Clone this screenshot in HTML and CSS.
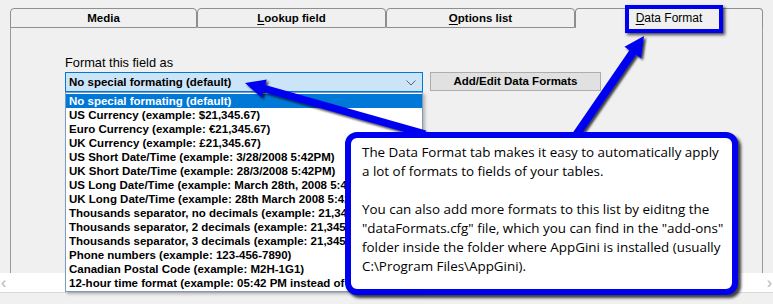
FILE: index.html
```html
<!DOCTYPE html>
<html>
<head>
<meta charset="utf-8">
<link rel="stylesheet" href="styles.css">
</head>
<body>
<div class="window">
  <div class="tabs">
    <div class="tab tab-media">Media</div>
    <div class="tab tab-lookup"><u>L</u>ookup field</div>
    <div class="tab tab-options"><u>O</u>ptions list</div>
    <div class="tab tab-format selected"><u>D</u>ata Format</div>
  </div>
  <div class="panel">
    <div class="label">Format this field as</div>
    <div class="row">
      <div class="combo">
        <span>No special formating (default)</span>
        <svg class="chev" width="10" height="6" viewBox="0 0 10 6"><polyline points="0.5,0.5 5,5 9.5,0.5" fill="none" stroke="#606060" stroke-width="1"/></svg>
      </div>
      <div class="button">Add/Edit Data Formats</div>
    </div>
  </div>
  <div class="hscroll">
    <span class="sarrow">&lsaquo;</span>
    <span class="sarrow">&rsaquo;</span>
  </div>
  <div class="footer"></div>

  <ul class="dropdown">
    <li class="sel">No special formating (default)</li>
    <li>US Currency (example: $21,345.67)</li>
    <li>Euro Currency (example: €21,345.67)</li>
    <li>UK Currency (example: £21,345.67)</li>
    <li>US Short Date/Time (example: 3/28/2008 5:42PM)</li>
    <li>UK Short Date/Time (example: 28/3/2008 5:42PM)</li>
    <li>US Long Date/Time (example: March 28th, 2008 5:42PM)</li>
    <li>UK Long Date/Time (example: 28th March 2008 5:42PM)</li>
    <li>Thousands separator, no decimals (example: 21,345)</li>
    <li>Thousands separator, 2 decimals (example: 21,345.67)</li>
    <li>Thousands separator, 3 decimals (example: 21,345.678)</li>
    <li>Phone numbers (example: 123-456-7890)</li>
    <li>Canadian Postal Code (example: M2H-1G1)</li>
    <li>12-hour time format (example: 05:42 PM instead of 17:42)</li>
  </ul>

  <svg class="arrows" width="773" height="304" viewBox="0 0 773 304">
    <defs>
      <filter id="sh" x="-20%" y="-20%" width="140%" height="140%">
        <feDropShadow dx="2" dy="2" stdDeviation="1.3" flood-color="#000" flood-opacity="0.75"/>
      </filter>
    </defs>
    <polygon filter="url(#sh)" fill="#0000f0" points="245,83 266.8,79.4 265.2,85.1 426,130.6 424,137.4 263.2,91.9 261.6,97.6"/>
    <polygon filter="url(#sh)" fill="#0000f0" points="644,36 640.95,58.16 636,54.8 577.3,140.3 570.7,135.7 629.4,50.2 624.45,46.84"/>
  </svg>

  <div class="tabmark"></div>

  <div class="callout">
    The Data Format tab makes it easy to automatically apply<br>
    a lot of formats to fields of your tables.<br>
    <br>
    You can also add more formats to this list by eiditng the<br>
    "dataFormats.cfg" file, which you can find in the "add-ons"<br>
    folder inside the folder where AppGini is installed (usually<br>
    C:\Program Files\AppGini).
  </div>
</div>
</body>
</html>
```

FILE: styles.css
```css
html, body {
  margin: 0;
  padding: 0;
}
body {
  background: #f0f0f0;
  width: 773px;
  height: 304px;
  overflow: hidden;
  font-family: "Liberation Sans", Arial, sans-serif;
  color: #000;
}
.window {
  position: relative;
  width: 773px;
  height: 304px;
}
.tabs {
  display: flex;
  padding: 8px 0 0 10px;
  height: 20px;
}
.tab {
  box-sizing: border-box;
  height: 20px;
  border: 1px solid #8e8e8e;
  border-radius: 4px 4px 0 0;
  background: #f0f0f0;
  font-size: 11.5px;
  font-weight: bold;
  line-height: 19px;
  text-align: center;
  color: #000;
}
.tab u {
  text-decoration-thickness: 1px;
  text-underline-offset: 2px;
}
.tab-media { width: 187px; }
.tab-lookup { width: 189px; }
.tab-options { width: 189px; }
.tab-format { width: 188px; }
.tab.selected {
  border-bottom: none;
  font-weight: normal;
  font-size: 12px;
  height: 20px;
}
.panel {
  box-sizing: border-box;
  margin-left: 10px;
  width: 753px;
  height: 245px;
  border-left: 1px solid #9a9a9a;
  border-right: 1px solid #9a9a9a;
  padding: 27px 0 0 54px;
}
.label {
  font-size: 12.8px;
  line-height: 15px;
  height: 15px;
}
.row {
  display: flex;
  gap: 7px;
  margin-top: 2px;
}
.combo {
  box-sizing: border-box;
  width: 358px;
  height: 20px;
  border: 1px solid #0078d7;
  background: #cce4f7;
  display: flex;
  align-items: center;
  justify-content: space-between;
  padding: 0 6px 0 3px;
  font-size: 11.5px;
  font-weight: bold;
}
.chev {
  display: block;
  margin-top: 1px;
}
.button {
  box-sizing: border-box;
  width: 171px;
  height: 19px;
  border: 1px solid #adadad;
  background: #e1e1e1;
  font-size: 11.5px;
  font-weight: bold;
  line-height: 17px;
  text-align: center;
}
.hscroll {
  height: 19px;
  background: #fff;
  display: flex;
  justify-content: space-between;
  align-items: center;
  padding: 0 1px 0 1px;
  box-sizing: border-box;
}
.sarrow {
  color: #b4b4b4;
  font-size: 16px;
  line-height: 19px;
}
.footer {
  border-top: 1px solid #dadada;
  height: 11px;
  background: #f0f0f0;
}
.dropdown {
  position: absolute;
  left: 65px;
  top: 92px;
  width: 358px;
  box-sizing: border-box;
  margin: 0;
  padding: 1px 0 1px 0;
  list-style: none;
  background: #fff;
  border: 1px solid #7a9cc4;
  box-shadow: 2px 2px 3px rgba(0,0,0,0.25);
  z-index: 1;
  overflow: hidden;
  white-space: nowrap;
}
.dropdown li {
  height: 14px;
  line-height: 14px;
  font-size: 11.5px;
  font-weight: bold;
  padding-left: 3px;
}
.dropdown li.sel {
  background: #0078d7;
  color: #fff;
}
.arrows {
  position: absolute;
  left: 0;
  top: 0;
  z-index: 2;
}
.tabmark {
  position: absolute;
  left: 625px;
  top: 5px;
  width: 98px;
  height: 28px;
  box-sizing: border-box;
  border: 4px solid #0000f0;
  box-shadow: 2px 2px 3px rgba(0,0,0,0.7);
  z-index: 2;
}
.callout {
  position: absolute;
  left: 345px;
  top: 132px;
  width: 393px;
  height: 163px;
  box-sizing: border-box;
  background: #fff;
  border: 6px solid #0000f0;
  border-radius: 12px;
  box-shadow: 3px 3px 3px rgba(0,0,0,0.75);
  padding: 5px 0 0 11px;
  font-family: "Open Sans", "Noto Sans", sans-serif;
  font-size: 13.4px;
  line-height: 19px;
  color: #000;
  white-space: nowrap;
  z-index: 3;
}
```
